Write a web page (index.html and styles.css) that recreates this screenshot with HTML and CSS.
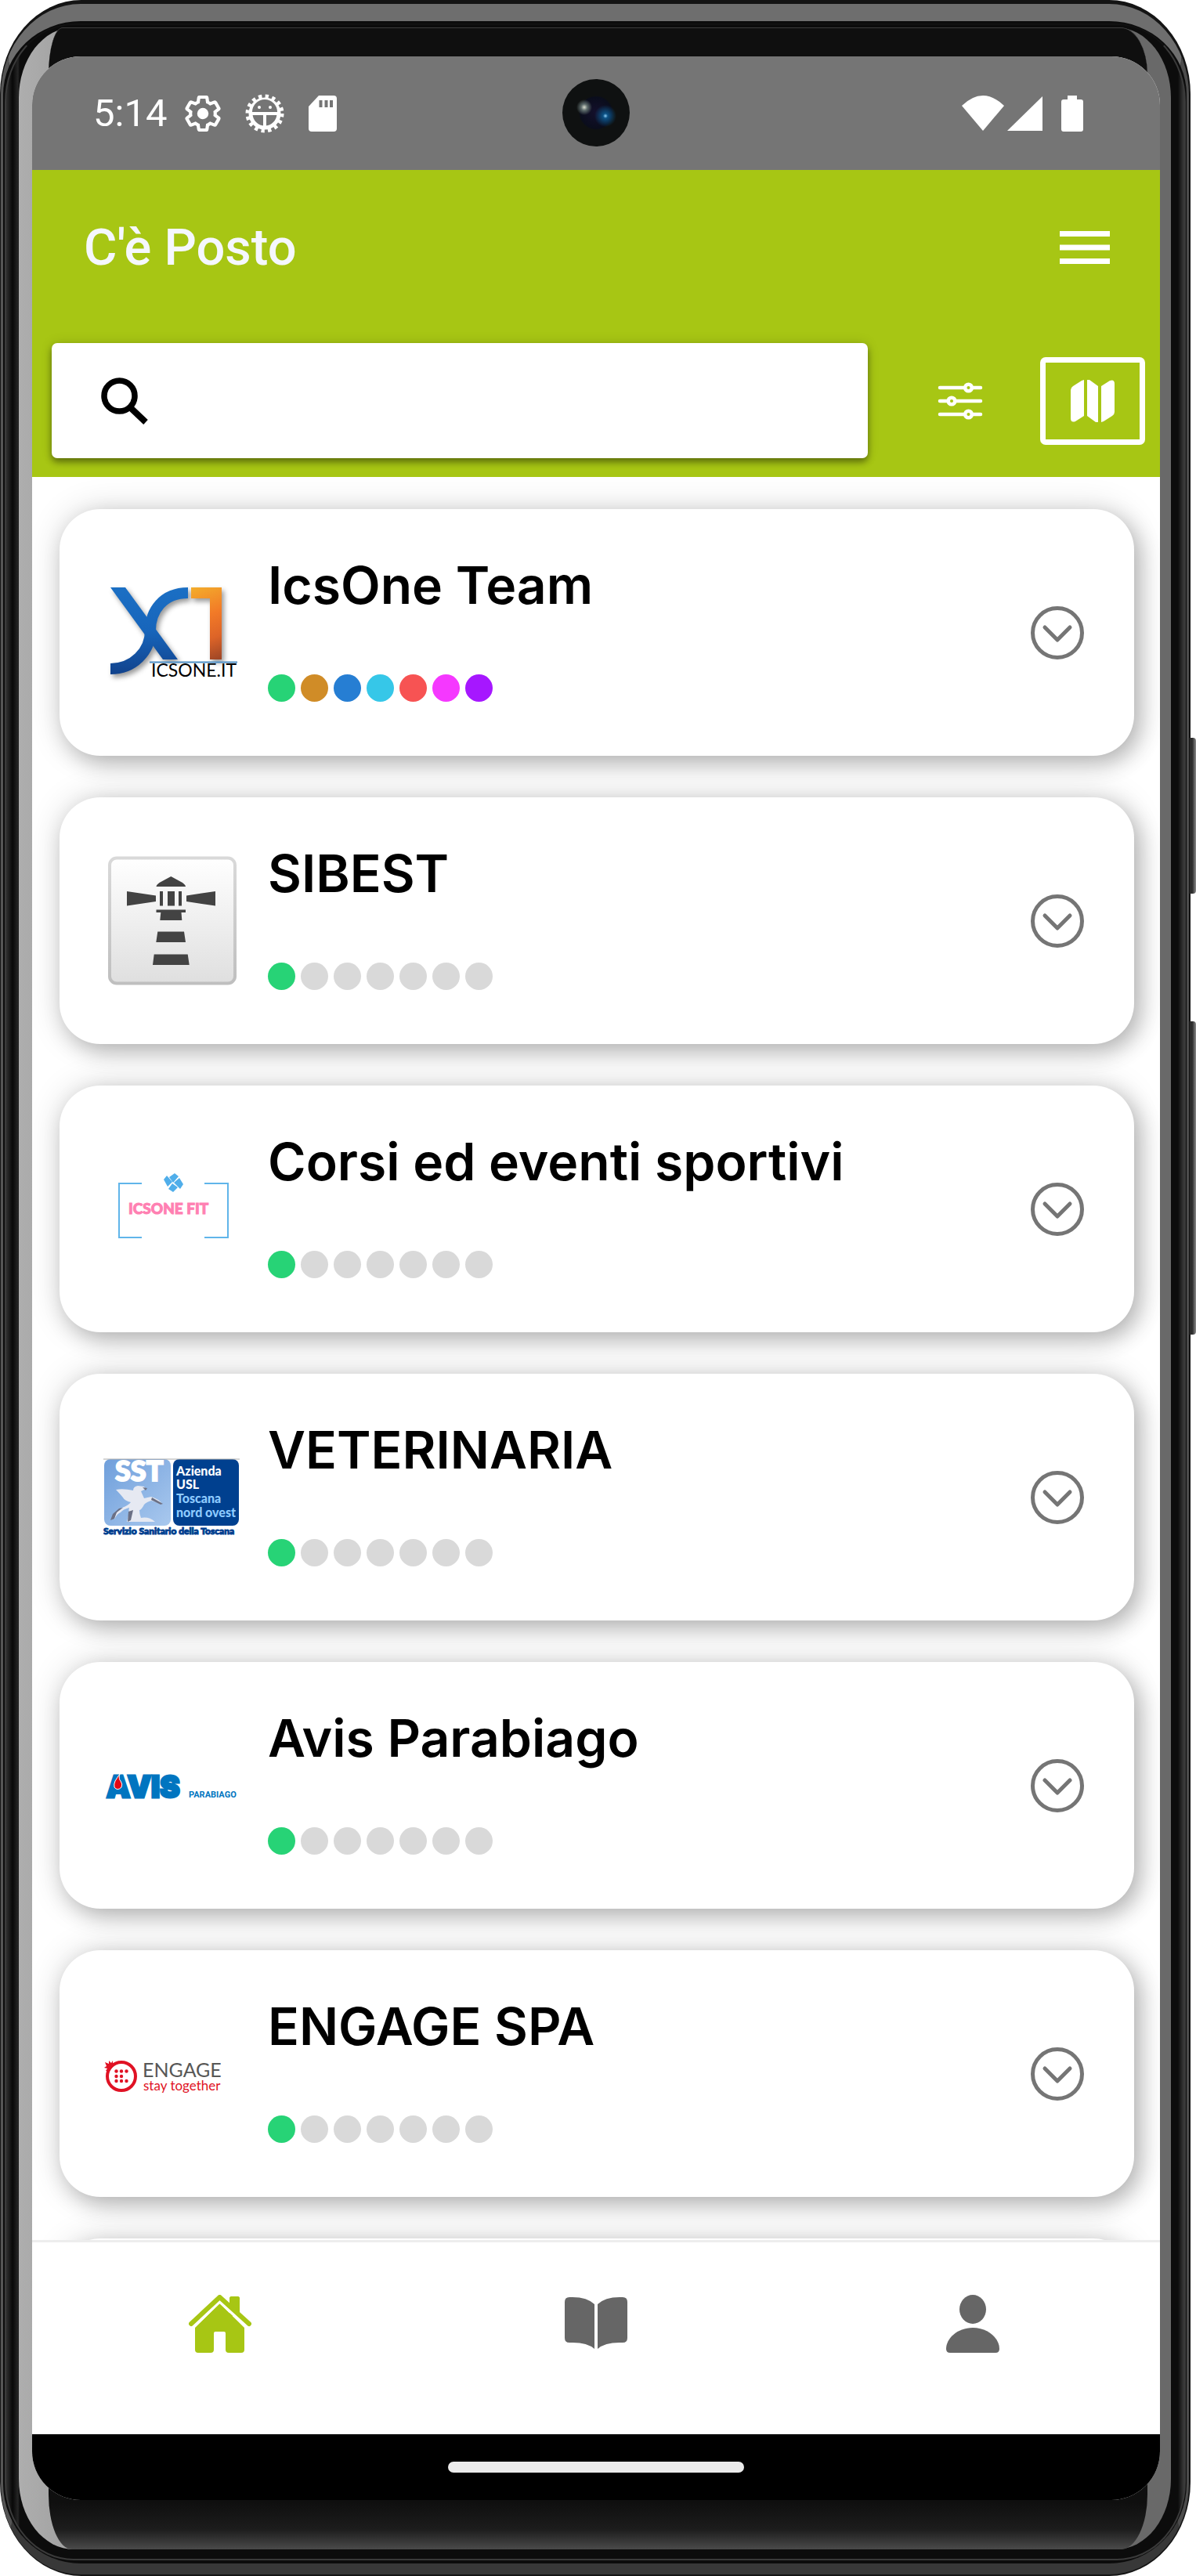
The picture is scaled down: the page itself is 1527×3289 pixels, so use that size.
FILE: index.html
```html
<!DOCTYPE html>
<html lang="it">
<head>
<meta charset="utf-8">
<meta name="viewport" content="width=device-width, initial-scale=1">
<title>C'è Posto</title>
<link rel="stylesheet" href="styles.css">
</head>
<body>
<div class="phone">
  <div class="rim"></div>
  <div class="lip"></div>
  <div class="glare"></div>
  <div class="glass"></div>
  <div class="side-key side-key-power"></div>
  <div class="side-key side-key-volume"></div>

  <div class="screen">
    <div class="status">
      <time class="clock">5:14</time>
      <div class="status-icons">
        <svg width="46" height="46" viewBox="1.5 1.5 21 21" aria-hidden="true"><path fill="none" stroke="#fff" stroke-width="1.9" d="M19.14 12.94c.04-.3.06-.61.06-.94 0-.32-.02-.64-.07-.94l2.03-1.58c.18-.14.23-.41.12-.61l-1.92-3.32c-.12-.22-.37-.29-.59-.22l-2.39.96c-.5-.38-1.03-.7-1.62-.94l-.36-2.54c-.04-.24-.24-.41-.48-.41h-3.84c-.24 0-.43.17-.47.41l-.36 2.54c-.59.24-1.13.57-1.62.94l-2.39-.96c-.22-.08-.47 0-.59.22L2.74 8.87c-.12.21-.08.47.12.61l2.03 1.58c-.05.3-.09.63-.09.94s.02.64.07.94l-2.03 1.58c-.18.14-.23.41-.12.61l1.92 3.32c.12.22.37.29.59.22l2.39-.96c.5.38 1.03.7 1.62.94l.36 2.54c.05.24.24.41.48.41h3.84c.24 0 .44-.17.47-.41l.36-2.54c.59-.24 1.13-.56 1.62-.94l2.39.96c.22.08.47 0 .59-.22l1.92-3.32c.12-.22.07-.47-.12-.61l-2.01-1.58z"/><circle cx="12" cy="12" r="3.3" fill="#fff"/></svg>
        <svg width="50" height="50" viewBox="0 0 50 50" aria-hidden="true"><circle cx="25" cy="25" r="22" fill="none" stroke="#fff" stroke-width="5" stroke-dasharray="4.3 4.34"/><circle cx="25" cy="25" r="18" fill="none" stroke="#fff" stroke-width="5"/><path d="M9 23a16 16 0 0 1 32 0z" fill="#757575"/><path d="M6 25h38M25 25v18" stroke="#fff" stroke-width="4"/><circle cx="18" cy="17" r="2" fill="#fff"/><circle cx="32" cy="17" r="2" fill="#fff"/></svg>
        <svg width="36" height="46" viewBox="0 0 36 46" aria-hidden="true"><path fill="#fff" d="M13 0h19a4 4 0 0 1 4 4v38a4 4 0 0 1-4 4H4a4 4 0 0 1-4-4V14z"/><path d="M15.500 6v9M22.500 6v9M29 6v9" stroke="#757575" stroke-width="4"/></svg>
      </div>
      <div class="camera"></div>
      <div class="status-signals">
        <svg width="54" height="46" viewBox="0 0 54 46" aria-hidden="true"><path fill="#fff" d="M0 13Q27-13 54 13L27 45z"/></svg>
        <svg width="45" height="46" viewBox="0 0 45 46" aria-hidden="true"><path fill="#fff" d="M45 1v44H0z"/></svg>
        <svg class="battery" width="28" height="46" viewBox="0 0 28 46" aria-hidden="true"><path fill="#fff" d="M8 0h12v5h5a3 3 0 0 1 3 3v35a3 3 0 0 1-3 3H3a3 3 0 0 1-3-3V8a3 3 0 0 1 3-3h5z"/></svg>
      </div>
    </div>

    <header class="header">
      <div class="title-row">
        <h1 class="app-title">C'è Posto</h1>
        <button class="icon-button" type="button" aria-label="Menu">
          <svg width="64" height="44" viewBox="0 0 64 44"><path d="M0 4.500h64M0 22h64M0 39.500h64" stroke="#fff" stroke-width="7"/></svg>
        </button>
      </div>
      <div class="search-row">
        <div class="search">
          <label class="search-label" for="search" aria-label="Cerca">
            <svg width="60" height="60" viewBox="0 0 60 60"><circle cx="23.500" cy="23.500" r="19.500" fill="none" stroke="#000" stroke-width="7.500"/><path d="M37 38l20 19" stroke="#000" stroke-width="8"/></svg>
          </label>
          <input class="search-input" id="search" type="search">
        </div>
        <button class="icon-button filter-button" type="button" aria-label="Filtri">
          <svg width="58" height="48" viewBox="0 0 58 48"><g fill="none" stroke="#fff" stroke-width="4.500" stroke-linecap="round"><path d="M3 7h31M45 7h10M3 24h9M24 24h31M3 41h31M45 41h10"/><circle cx="39.500" cy="7" r="4.300"/><circle cx="18" cy="24" r="4.300"/><circle cx="39.500" cy="41" r="4.300"/></g></svg>
        </button>
        <button class="icon-button map-button" type="button" aria-label="Mappa">
          <svg width="56" height="54" viewBox="0 0 56 54"><path fill="#fff" d="M17 0v46L6 53q-6 2-6-4V13q0-3 3-5L14 1zM21 0h3l11 8v46h-3l-11-8zM39 8l11-7q6-2 6 4v36q0 3-3 5l-11 7-3 1z"/></svg>
        </button>
      </div>
    </header>

    <main class="list-area">
      <ul class="list">
        <li class="card">
          <svg class="logo" viewBox="0 0 176 176" role="img" aria-label="IcsOne">
            <defs>
              <linearGradient id="blue" x1="0" y1="30" x2="0" y2="141" gradientUnits="userSpaceOnUse"><stop offset="0" stop-color="#1b6fc4"/><stop offset=".5" stop-color="#1765bb"/><stop offset="1" stop-color="#11428c"/></linearGradient>
              <linearGradient id="orange" x1="115" y1="30" x2="150" y2="122" gradientUnits="userSpaceOnUse"><stop offset="0" stop-color="#f3ac2c"/><stop offset=".4" stop-color="#f27a27"/><stop offset=".7" stop-color="#dd6428"/><stop offset="1" stop-color="#9c4526"/></linearGradient>
            </defs>
            <g class="logo-shadow"><path fill="url(#blue)" d="M9 30h19l67 92H76z"/><path fill="none" stroke="url(#blue)" stroke-width="14" d="M108 37C76 37 60 60 60 85C60 112 38 134 9 134"/><path fill="url(#orange)" d="M112 30h39v92h-15V44h-24z"/></g>
            <path d="M59 125.500h112" stroke="#4c8dc4" stroke-width="2"/>
            <text class="logo-icsone" x="61" y="144">ICSONE.IT</text>
          </svg>
          <div class="card-body">
            <h2 class="card-title">IcsOne Team</h2>
            <div class="dots"><i class="dot green"></i><i class="dot ochre"></i><i class="dot blue"></i><i class="dot cyan"></i><i class="dot red"></i><i class="dot pink"></i><i class="dot purple"></i></div>
          </div>
          <button class="icon-button" type="button" aria-label="Espandi"><svg class="chevron" viewBox="0 0 68 68"><circle cx="34" cy="34" r="31.500"/><path d="M18 27l16 16 16-16"/></svg></button>
        </li>
        <li class="card">
          <svg class="logo" viewBox="0 0 176 176" role="img" aria-label="SIBEST">
            <defs>
              <linearGradient id="tile" x1="0" y1="0" x2="0" y2="1"><stop offset="0" stop-color="#fff"/><stop offset="1" stop-color="#dfdfdf"/></linearGradient>
              <linearGradient id="tile-edge" x1="0" y1="0" x2="0" y2="1"><stop offset="0" stop-color="#d9d9d9"/><stop offset="1" stop-color="#bfbfbf"/></linearGradient>
            </defs>
            <rect x="8" y="7.500" width="160" height="160" rx="9" fill="url(#tile)" stroke="url(#tile-edge)" stroke-width="4"/>
            <path fill="#434343" d="M86.300 31L101 39q4 3 4 5H67.500q0-2 4-5zM30 50l37 5.500V63l-37 5.500zM143 50l-37 5.500V63l37 5.500zM72 50h4v18.500h-4zM82 50h9v18.500h-9zM96 50h4v18.500h-4zM67.500 73.500H105V77h-5.500l.8 10h-28l1-10h-5.800zM69.300 101.500H103l2 13.500H67.300zM64.700 130.500h43l2 13.500H63z"/>
          </svg>
          <div class="card-body">
            <h2 class="card-title">SIBEST</h2>
            <div class="dots"><i class="dot green"></i><i class="dot"></i><i class="dot"></i><i class="dot"></i><i class="dot"></i><i class="dot"></i><i class="dot"></i></div>
          </div>
          <button class="icon-button" type="button" aria-label="Espandi"><svg class="chevron" viewBox="0 0 68 68"><circle cx="34" cy="34" r="31.500"/><path d="M18 27l16 16 16-16"/></svg></button>
        </li>
        <li class="card">
          <svg class="logo" viewBox="0 0 176 176" role="img" aria-label="IcsOne Fit">
            <path fill="none" stroke="#60b5ea" stroke-width="2" d="M49 55H20v69h29M129 55h30v69h-30"/>
            <path fill="#50aeea" d="M84 47l7-5 5 4-7 8zM90 54l7-6 5 8-4 6zM88 55l7 5-6 6-6-4zM77 50l4-5 7 8-6 6z"/>
            <text class="logo-fit" x="32" y="94">ICSONE FIT</text>
          </svg>
          <div class="card-body">
            <h2 class="card-title">Corsi ed eventi sportivi</h2>
            <div class="dots"><i class="dot green"></i><i class="dot"></i><i class="dot"></i><i class="dot"></i><i class="dot"></i><i class="dot"></i><i class="dot"></i></div>
          </div>
          <button class="icon-button" type="button" aria-label="Espandi"><svg class="chevron" viewBox="0 0 68 68"><circle cx="34" cy="34" r="31.500"/><path d="M18 27l16 16 16-16"/></svg></button>
        </li>
        <li class="card">
          <svg class="logo" viewBox="0 0 176 176" role="img" aria-label="Azienda USL Toscana nord ovest">
            <defs><linearGradient id="sky" x1="0" y1="0" x2="1" y2="1"><stop offset="0" stop-color="#6f9fdb"/><stop offset="1" stop-color="#a9c8ee"/></linearGradient></defs>
            <rect x="1" y="39" width="85" height="85" rx="8" fill="url(#sky)"/>
            <rect x="89" y="39" width="84" height="85" rx="8" fill="#00408f"/>
            <path d="M0 39h174" stroke="#aaa"/>
            <text class="logo-sst" x="15" y="67">SST</text>
            <path fill="#e6e9f2" d="M16 78q9-2 22 1 0-5 6-6l8 1 2 3-6 3 4 9 9-2q10 3 14 9l-2 1q-6-4-12-5-9 3-10 7-3 5-5 5 0 5 2 10 10-2 18 5H30l3-12q-1-4 0-6-8 2-11 6-5 2-8 9 0-9 10-15 8-3 11-7-8-2-10-6-4-5-9-10z"/>
            <path fill="#6b7085" d="M50 75l6 1-2 3zM9 117l3-8 8-7 5-1-8 6-3 8zM32 106l6-2-3 13-4 2zM62 88l14 8-3 1-12-6z"/>
            <g class="logo-usl"><text x="93" y="60">Azienda</text><text x="93" y="77">USL</text><text class="logo-usl-light" x="93" y="95">Toscana</text><text class="logo-usl-light" x="93" y="113">nord ovest</text></g>
            <text class="logo-servizio" x="0" y="135">Servizio Sanitario della Toscana</text>
          </svg>
          <div class="card-body">
            <h2 class="card-title">VETERINARIA</h2>
            <div class="dots"><i class="dot green"></i><i class="dot"></i><i class="dot"></i><i class="dot"></i><i class="dot"></i><i class="dot"></i><i class="dot"></i></div>
          </div>
          <button class="icon-button" type="button" aria-label="Espandi"><svg class="chevron" viewBox="0 0 68 68"><circle cx="34" cy="34" r="31.500"/><path d="M18 27l16 16 16-16"/></svg></button>
        </li>
        <li class="card">
          <svg class="logo" viewBox="0 0 176 176" role="img" aria-label="Avis Parabiago">
            <text class="logo-avis" x="4" y="103">AVIS</text>
            <path fill="#e30613" stroke="#fff" d="M21 73q-2 6 1 9 3 4 1 8-5 5-9 0-1-4 1-8 3-5 6-9z"/>
            <text class="logo-parabiago" x="109" y="103">PARABIAGO</text>
          </svg>
          <div class="card-body">
            <h2 class="card-title">Avis Parabiago</h2>
            <div class="dots"><i class="dot green"></i><i class="dot"></i><i class="dot"></i><i class="dot"></i><i class="dot"></i><i class="dot"></i><i class="dot"></i></div>
          </div>
          <button class="icon-button" type="button" aria-label="Espandi"><svg class="chevron" viewBox="0 0 68 68"><circle cx="34" cy="34" r="31.500"/><path d="M18 27l16 16 16-16"/></svg></button>
        </li>
        <li class="card">
          <svg class="logo" viewBox="0 0 176 176" role="img" aria-label="Engage">
            <circle cx="23" cy="91" r="18" fill="none" stroke="#e01224" stroke-width="4"/>
            <path fill="#e01224" d="M2 73l5 2V71l3 3 2-3v4l4-1-9 11-4-1 2-3-4-1 3-2z"/>
            <g fill="#e01224"><circle cx="16.500" cy="84.500" r="2.200"/><circle cx="23" cy="84.500" r="2.200"/><circle cx="29.500" cy="84.500" r="2.200"/><circle cx="16.500" cy="91" r="2.200"/><circle cx="23" cy="91" r="2.200"/><circle cx="16.500" cy="97" r="2.200"/><circle cx="23" cy="97" r="2.200"/><circle cx="29.500" cy="97" r="2.200"/></g>
            <text class="logo-engage" x="50" y="92">ENGAGE</text>
            <text class="logo-together" x="51" y="109">stay together</text>
          </svg>
          <div class="card-body">
            <h2 class="card-title">ENGAGE SPA</h2>
            <div class="dots"><i class="dot green"></i><i class="dot"></i><i class="dot"></i><i class="dot"></i><i class="dot"></i><i class="dot"></i><i class="dot"></i></div>
          </div>
          <button class="icon-button" type="button" aria-label="Espandi"><svg class="chevron" viewBox="0 0 68 68"><circle cx="34" cy="34" r="31.500"/><path d="M18 27l16 16 16-16"/></svg></button>
        </li>
        <li class="card" aria-hidden="true"></li>
      </ul>
    </main>

    <nav class="tabs">
      <a class="tab" href="#home" aria-label="Home"><svg width="80" height="75" viewBox="0 0 80 75"><path fill="#a7c614" d="M39.500 11L71 42v28q0 4-4 4H51q-4 0-4-4V49q0-2-2-2H34q-2 0-2 2v21q0 4-4 4H12q-4 0-4-4V42zM52 5q0-3 3-3h7q3 0 3 3v22H52z"/><path d="M3 38L39.500 3L77 38" fill="none" stroke="#fff" stroke-width="12"/><path d="M52 5q0-3 3-3h7q3 0 3 3v20L52 13z" fill="#a7c614"/><path d="M3 37L39.500 3L77 37" fill="none" stroke="#a7c614" stroke-width="6" stroke-linecap="round" stroke-linejoin="round"/></svg></a>
      <a class="tab" href="#prenotazioni" aria-label="Prenotazioni"><svg width="80" height="75" viewBox="0 0 80 75"><path fill="#666" d="M6 3q22-1 32 9v57Q28 60 6 61q-6 0-6-6V9q0-6 6-6zM74 3q-22-1-32 9v57q10-9 32-8 6 0 6-6V9q0-6-6-6z"/></svg></a>
      <a class="tab" href="#profilo" aria-label="Profilo"><svg width="80" height="75" viewBox="0 0 80 75"><ellipse cx="41" cy="18.500" rx="17" ry="18.500" fill="#666"/><path fill="#666" d="M41 42c20 0 34 14 34 27q0 5-5 5H12q-5 0-5-5c0-13 14-27 34-27z"/></svg></a>
    </nav>
    <div class="gesture"><div class="pill"></div></div>
  </div>
</div>
</body>
</html>
```
FILE: styles.css
```css
* { box-sizing: border-box; }

body {
  margin: 0;
  background: #fff;
  font-family: Roboto, "Liberation Sans", sans-serif;
}

svg { display: block; flex: none; }

/* Device body */
.phone {
  position: relative;
  display: flex;
  height: 100vh;
  margin-right: 7px;
  padding: 72px 39px 97px 41px;
  border-radius: 104px / 120px;
  background: #141414;
}

.rim, .lip, .glare, .glass, .side-key { position: absolute; }

.rim {
  inset: 5px 2px 2px 1px;
  border: solid;
  border-width: 22px 3px 14px 3px;
  border-color: #6e6e6e #4c4c4c #383838 #555;
  border-radius: 102px / 116px;
  background: #0c0c0c;
}

.lip {
  inset: 30px 6px 20px 6px;
  border: 2px solid #3a3a3a;
  border-top-color: #111;
  border-radius: 88px / 100px;
  background: linear-gradient(to right, #303030 0, #080808 8px, #262626 15px, #0c0c0c 17px, #0c0c0c calc(100% - 8px), #3c3c3c 100%);
}

.glare {
  inset: 35px 25px 34px 24px;
  border-radius: 70px / 90px;
  background: linear-gradient(to right, #aeaeae 0, #a4a4a4 50px, #696969 calc(100% - 50px), #696969 100%);
}

.glass {
  inset: 35px 55px 34px 62px;
  border-top: 1px solid #3c3c3c;
  border-radius: 18px 34px 34px 30px / 60px 60px 70px 70px;
  background: linear-gradient(to top, #4a4a4a 0, #1c1c1c 26px, #0f0f0f 60px);
}

.side-key {
  right: -7px;
  width: 8px;
  border-radius: 0 4px 4px 0;
  background: linear-gradient(to right, #2c2c2c 40%, #8a8a8a);
}
.side-key-power { top: 942px; height: 199px; }
.side-key-volume { top: 1304px; height: 400px; }

.screen {
  position: relative;
  display: flex;
  flex: 1;
  flex-direction: column;
  min-width: 0;
  overflow: hidden;
  border-radius: 62px;
  background: #fff;
}

/* Status bar */
.status {
  position: relative;
  display: flex;
  flex: none;
  align-items: center;
  height: 145px;
  padding: 0 98px 0 78px;
  background: #757575;
}
.clock { color: #fff; font-size: 49px; line-height: 56px; }
.status-icons { display: flex; align-items: center; gap: 31px; margin-left: 23px; }
.status-signals { display: flex; align-items: center; gap: 4px; margin-left: auto; }
.battery { margin-left: 20px; }
.camera {
  position: absolute;
  top: 29px;
  left: calc(50% - 43px);
  width: 86px;
  height: 86px;
  border-radius: 50%;
  background:
    radial-gradient(circle at 28px 36px, #d8dccf 0, #5d6b6b 4px, transparent 10px),
    radial-gradient(circle at 55px 47px, #8fd0f8 0, #0d5285 3px, transparent 14px),
    radial-gradient(circle at 43px 43px, #14102c 0, #0a0d1c 20px, #0f1111 22px);
}

/* Header */
.header { flex: none; padding-bottom: 24px; background: #a7c614; }
.title-row {
  display: flex;
  align-items: center;
  justify-content: space-between;
  height: 197px;
  padding: 0 64px 0 66px;
}
.app-title { margin: 0; color: #f5f7fd; font-size: 65px; font-weight: 500; line-height: 72px; }
.icon-button {
  display: flex;
  flex: none;
  align-items: center;
  justify-content: center;
  padding: 0;
  border: 0;
  background: none;
}
.search-row { display: flex; align-items: center; padding: 24px 19px 0 25px; }
.search {
  display: flex;
  flex: 1;
  align-items: center;
  height: 147px;
  min-width: 0;
  padding-left: 63px;
  border-radius: 7px;
  background: #fff;
  box-shadow: 0 5px 8px rgba(0, 0, 0, .4), 0 0 16px rgba(0, 0, 0, .12);
}
.search-input {
  flex: 1;
  min-width: 0;
  height: 100%;
  padding: 0 32px;
  border: 0;
  outline: 0;
  background: none;
  font: inherit;
  font-size: 48px;
}
.filter-button { width: 120px; height: 120px; margin: 0 42px 0 58px; }
.map-button { width: 134px; height: 112px; border: 7px solid #fff; border-radius: 7px; }

/* List */
.list-area { flex: 1; min-height: 0; overflow-y: auto; scrollbar-width: none; }
.list {
  display: flex;
  flex-direction: column;
  gap: 53px;
  margin: 0;
  padding: 41px 33px 53px 35px;
  list-style: none;
}
.card {
  display: flex;
  flex: none;
  align-items: center;
  height: 315px;
  padding: 0 64px 0 56px;
  border-radius: 52px;
  background: #fff;
  box-shadow: 8px 10px 28px rgba(0, 0, 0, .24), 0 0 44px rgba(0, 0, 0, .14);
}
.logo { width: 176px; height: 176px; }
.card-body {
  display: flex;
  flex: 1;
  flex-direction: column;
  gap: 78px;
  min-width: 0;
  margin-left: 34px;
  padding-bottom: 8px;
}
.card-title {
  margin: 0;
  color: #000;
  font-family: Inter, "Open Sans", sans-serif;
  font-size: 66px;
  font-weight: 600;
  line-height: 72px;
  white-space: nowrap;
}
.dots { display: flex; gap: 7px; }
.dot { width: 35px; height: 35px; border-radius: 50%; background: #d9d9d9; }
.green { background: #27d376; }
.ochre { background: #d08c27; }
.blue { background: #267ed3; }
.cyan { background: #36c7e8; }
.red { background: #f75353; }
.pink { background: #f538ff; }
.purple { background: #a617ff; }
.chevron {
  width: 68px;
  height: 68px;
  fill: none;
  stroke: #757575;
  stroke-width: 5;
  stroke-linecap: round;
  stroke-linejoin: round;
}

/* Logo lettering */
.logo-shadow { filter: drop-shadow(3px 4px 3px rgba(0, 0, 0, .4)); }
.logo-icsone { font: 400 23px Lato, sans-serif; }
.logo-fit { fill: #ff80b2; font: 900 19px Lato, sans-serif; stroke: #ff80b2; stroke-width: 1; }
.logo-sst { fill: #fff; stroke: #fff; stroke-width: 2; font: 900 36px Lato, sans-serif; }
.logo-usl { fill: #fff; font: 900 16px Lato, sans-serif; }
.logo-usl-light { fill: #8ecbff; }
.logo-servizio { fill: #00408f; stroke: #00408f; stroke-width: 1; font: 900 12px Lato, sans-serif; }
.logo-avis { fill: #0075c0; stroke: #0075c0; stroke-width: 3; font: 900 38px Inter, sans-serif; }
.logo-parabiago { fill: #0075c0; font: 700 11px Roboto, sans-serif; }
.logo-engage { fill: #575756; font: 400 25px Lato, sans-serif; }
.logo-together { fill: #e01224; font: 400 17px Lato, sans-serif; }

/* Bottom bar */
.tabs {
  display: grid;
  flex: none;
  grid-template-columns: repeat(3, 1fr);
  height: 248px;
  padding-top: 67px;
  border-top: 3px solid #ededed;
  background: #fff;
}
.tab { display: flex; align-items: flex-start; justify-content: center; }
.gesture {
  display: flex;
  flex: none;
  align-items: center;
  justify-content: center;
  height: 84px;
  background: #000;
}
.pill { width: 378px; height: 14px; border-radius: 7px; background: #ebebeb; }
```
